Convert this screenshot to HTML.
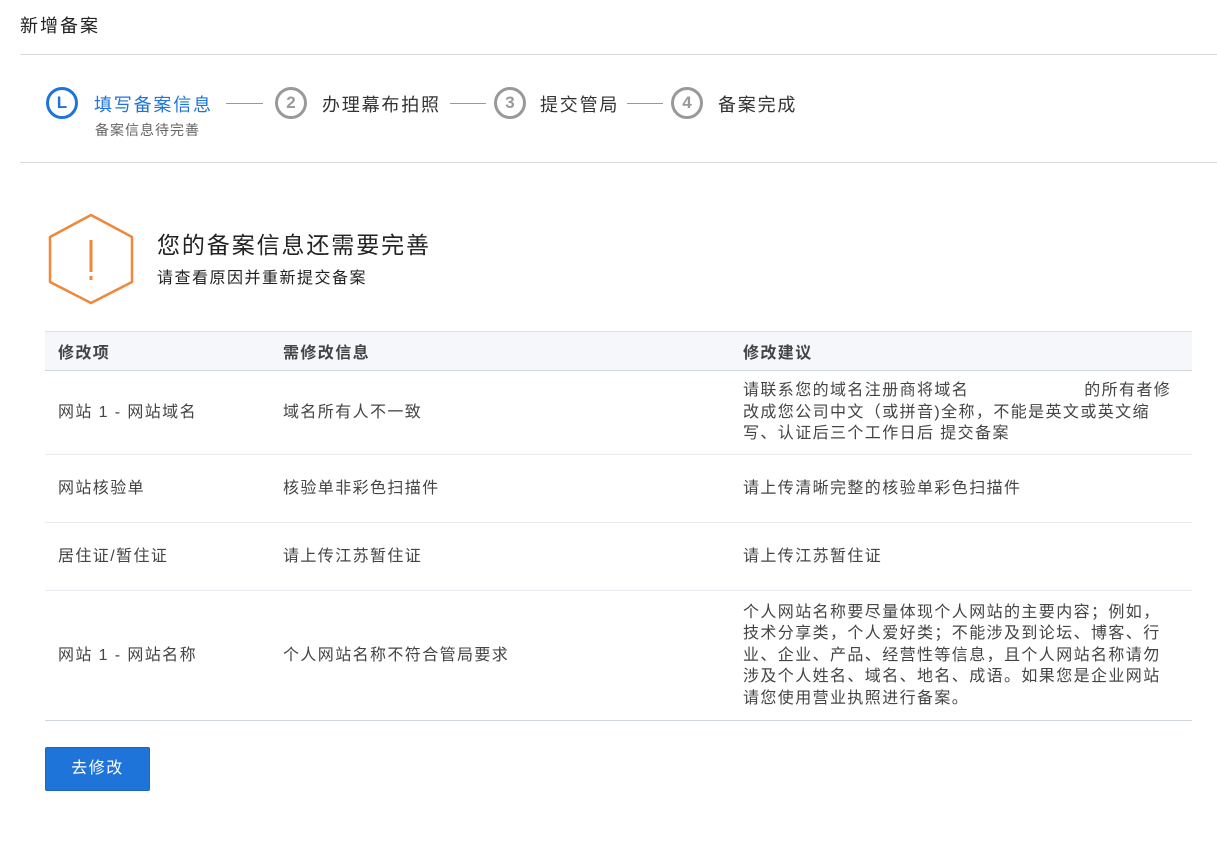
<!DOCTYPE html>
<html><head><meta charset="utf-8"><style>
*{margin:0;padding:0;box-sizing:border-box}
body{width:1217px;height:843px;background:#fff;font-family:"Liberation Sans","Noto Sans CJK SC",sans-serif;color:#333;position:relative;overflow:hidden}
.a{position:absolute;white-space:nowrap}
.hl{position:absolute;height:1px;background:#d9d9d9}
.circ{position:absolute;width:32px;height:32px;border:3px solid #999;border-radius:50%;text-align:center;line-height:26px;font-weight:bold;font-size:17px;color:#999}
.dash{position:absolute;height:1px;background:#999;top:103px}
.step{position:absolute;top:91px;font-size:18px;color:#333;letter-spacing:1.8px}
table{position:absolute;left:45px;top:331px;width:1147px;border-collapse:collapse;font-size:16px;color:#444;letter-spacing:1.4px}
th{background:#f5f7fa;text-align:left;font-weight:bold;height:39px;padding-left:13px;border-top:1px solid #dde1e6;border-bottom:1px solid #d0d5dc;font-size:16px;color:#444}
td{padding-left:13px;border-bottom:1px solid #e8ebef;vertical-align:middle;line-height:21.5px}
</style></head><body>
<div class="a" style="left:20px;top:12px;font-size:18px;color:#222;letter-spacing:2px">新增备案</div>
<div class="hl" style="left:20px;top:54px;width:1197px"></div>

<div class="circ" style="left:46px;top:87px;border-color:#1f74d9;color:#1f74d9">L</div>
<div class="step" style="left:94px;color:#1f74d9">填写备案信息</div>
<div class="a" style="left:95px;top:120px;font-size:14px;color:#666;letter-spacing:1px">备案信息待完善</div>
<div class="dash" style="left:226px;width:37px"></div>
<div class="circ" style="left:275px;top:87px">2</div>
<div class="step" style="left:322px">办理幕布拍照</div>
<div class="dash" style="left:450px;width:36px"></div>
<div class="circ" style="left:494px;top:87px">3</div>
<div class="step" style="left:540px">提交管局</div>
<div class="dash" style="left:627px;width:36px"></div>
<div class="circ" style="left:671px;top:87px">4</div>
<div class="step" style="left:718px">备案完成</div>
<div class="hl" style="left:20px;top:162px;width:1197px"></div>

<svg class="a" style="left:46px;top:212px" width="90" height="94" viewBox="0 0 90 94">
<path d="M45 3 L86 25 L86 70 L45 91 L4 70 L4 25 Z" fill="none" stroke="#f0873a" stroke-width="2.5" stroke-linejoin="round"/>
<rect x="43.5" y="28" width="3" height="32" fill="#f0873a"/>
<rect x="43.5" y="64" width="3" height="4" fill="#f0873a"/>
</svg>
<div class="a" style="left:157px;top:226px;font-size:23px;color:#222;letter-spacing:1.9px">您的备案信息还需要完善</div>
<div class="a" style="left:157px;top:264px;font-size:16px;color:#222;letter-spacing:1.5px">请查看原因并重新提交备案</div>

<table>
<tr><th style="width:225px">修改项</th><th style="width:460px">需修改信息</th><th>修改建议</th></tr>
<tr style="height:84px"><td>网站 1 - 网站域名</td><td>域名所有人不一致</td><td>请联系您的域名注册商将域名<span style="display:inline-block;width:115px"></span>的所有者修<br>改成您公司中文（或拼音)全称，不能是英文或英文缩<br>写、认证后三个工作日后 提交备案</td></tr>
<tr style="height:68px"><td>网站核验单</td><td>核验单非彩色扫描件</td><td>请上传清晰完整的核验单彩色扫描件</td></tr>
<tr style="height:68px"><td>居住证/暂住证</td><td>请上传江苏暂住证</td><td>请上传江苏暂住证</td></tr>
<tr style="height:130px"><td style="border-bottom-color:#d0d5dc">网站 1 - 网站名称</td><td style="border-bottom-color:#d0d5dc">个人网站名称不符合管局要求</td><td style="border-bottom-color:#d0d5dc">个人网站名称要尽量体现个人网站的主要内容；例如，<br>技术分享类，个人爱好类；不能涉及到论坛、博客、行<br>业、企业、产品、经营性等信息，且个人网站名称请勿<br>涉及个人姓名、域名、地名、成语。如果您是企业网站<br>请您使用营业执照进行备案。</td></tr>
</table>

<div class="a" style="left:45px;top:747px;width:105px;height:44px;background:#1f74d9;border:1px solid #1a66c2;border-radius:2px;color:#fff;font-size:16px;text-align:center;line-height:42px;letter-spacing:1.5px">去修改</div>
</body></html>
